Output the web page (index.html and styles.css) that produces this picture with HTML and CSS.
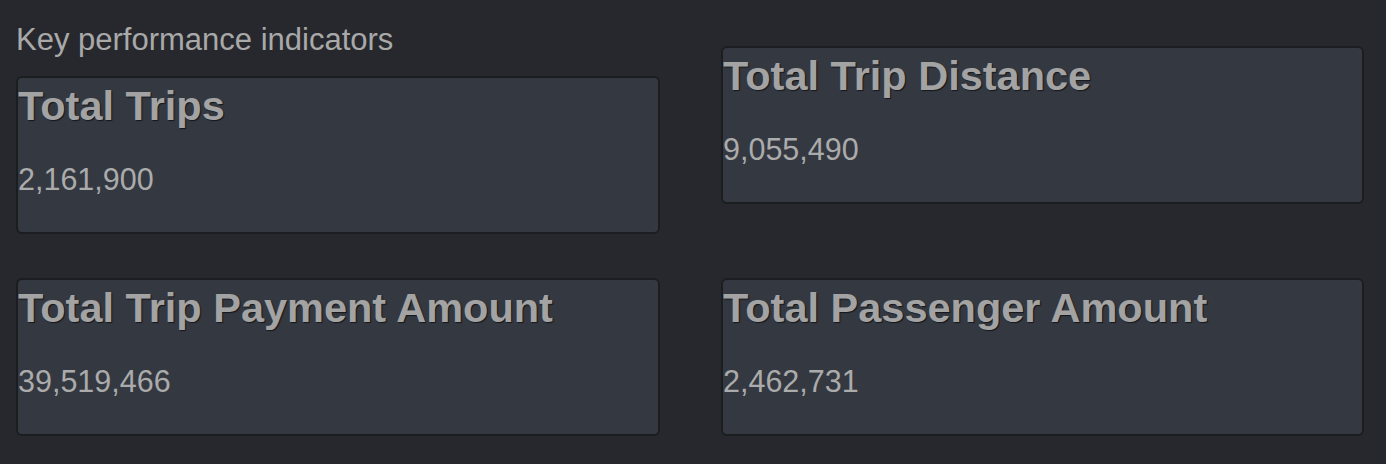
FILE: index.html
```html
<!DOCTYPE html>
<html lang="en">
<head>
<meta charset="utf-8">
<title>KPIs</title>
<link rel="stylesheet" href="styles.css">
</head>
<body>
<main class="kpi-page">
  <div class="kpi-row">
    <section class="kpi-col">
      <div class="section-label">Key performance indicators</div>
      <div class="kpi-card">
        <h2 class="kpi-title">Total Trips</h2>
        <p class="kpi-value">2,161,900</p>
      </div>
    </section>
    <section class="kpi-col kpi-col-offset">
      <div class="kpi-card">
        <h2 class="kpi-title">Total Trip Distance</h2>
        <p class="kpi-value">9,055,490</p>
      </div>
    </section>
  </div>
  <div class="kpi-row">
    <section class="kpi-col">
      <div class="kpi-card">
        <h2 class="kpi-title">Total Trip Payment Amount</h2>
        <p class="kpi-value">39,519,466</p>
      </div>
    </section>
    <section class="kpi-col">
      <div class="kpi-card">
        <h2 class="kpi-title">Total Passenger Amount</h2>
        <p class="kpi-value">2,462,731</p>
      </div>
    </section>
  </div>
</main>
</body>
</html>
```
FILE: styles.css
```css
html, body {
  margin: 0;
  padding: 0;
  background: #26282d;
}
body {
  font-family: "Liberation Sans", Arial, sans-serif;
  color: #a6a6a6;
}
.kpi-page {
  display: flex;
  flex-direction: column;
  gap: 44px;
  padding: 22px 22px 0 16px;
}
.kpi-row {
  display: grid;
  grid-template-columns: 644px 643px;
  column-gap: 61px;
  align-items: start;
}
.kpi-col {
  display: flex;
  flex-direction: column;
}
.kpi-col-offset {
  margin-top: 24px;
}
.section-label {
  font-size: 31px;
  line-height: 36px;
  color: #a9a9a9;
  margin-bottom: 18px;
}
.kpi-card {
  box-sizing: border-box;
  height: 158px;
  background: #343841;
  border: 2px solid #1b1d21;
  border-radius: 6px;
  display: flex;
  flex-direction: column;
}
.kpi-title {
  margin: 4px 0 0;
  font-size: 41.5px;
  line-height: 48px;
  font-weight: 700;
  color: #a3a3a3;
  text-shadow: 1px 1px 1px #15171a;
}
.kpi-value {
  margin: 32px 0 0;
  font-size: 30.5px;
  line-height: 35px;
  color: #ababab;
}
```
